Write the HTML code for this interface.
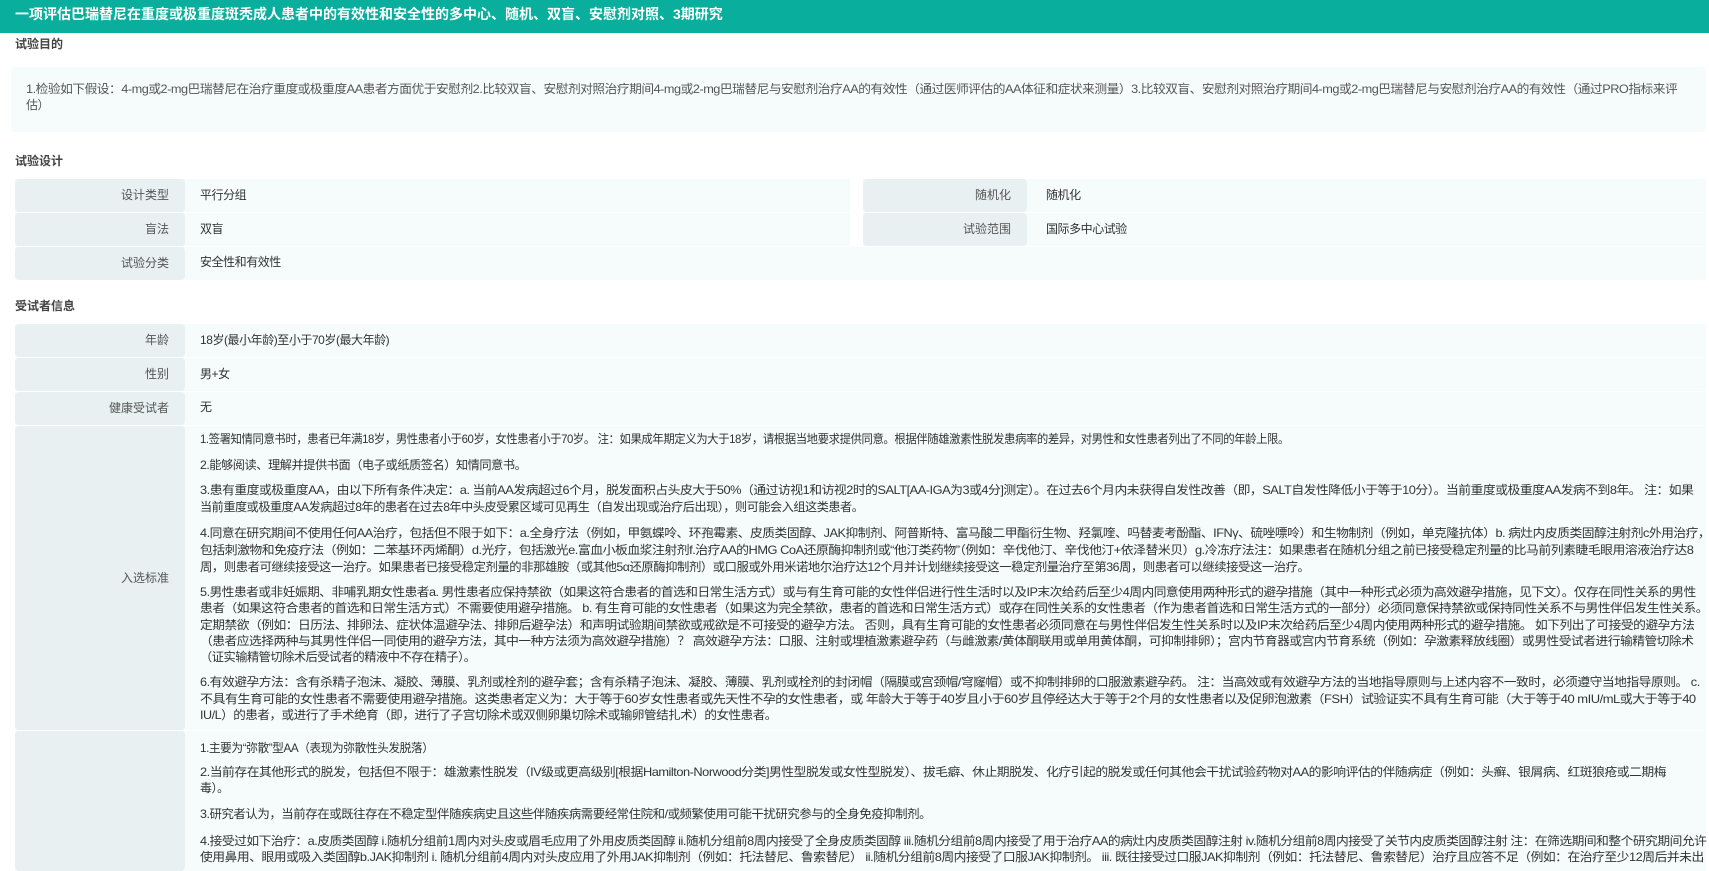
<!DOCTYPE html>
<html><head><meta charset="utf-8">
<style>
*{margin:0;padding:0;box-sizing:border-box}
body{width:1709px;height:862px;overflow:hidden;background:#fff;font-family:"Liberation Sans","Noto Sans CJK SC",sans-serif;font-size:12px;color:#333;position:relative}
.a{position:absolute;white-space:nowrap;line-height:17px;letter-spacing:-0.45px;transform-origin:0 0}
.hd{position:absolute;left:0;top:0;width:1709px;height:33px;background:#0aae9c;color:#fff;font-weight:bold;font-size:14px;line-height:29px;padding-left:15px}
.sec{position:absolute;left:15px;font-weight:bold;color:#444;font-size:12px;line-height:17px}
.box{position:absolute;background:#f6fbfb}
.lab{position:absolute;background:#e8f0f1;border-radius:4px;color:#555;text-align:right;padding-right:16px}
</style></head><body>
<div class="hd">一项评估巴瑞替尼在重度或极重度斑秃成人患者中的有效性和安全性的多中心、随机、双盲、安慰剂对照、3期研究</div>

<div class="sec" style="top:36px">试验目的</div>
<div class="box" style="left:11px;top:67px;width:1695px;height:65px;border-radius:4px"></div>
<div class="a" style="left:26px;top:81px;color:#555;transform:scaleX(1.059)">1.检验如下假设：4-mg或2-mg巴瑞替尼在治疗重度或极重度AA患者方面优于安慰剂2.比较双盲、安慰剂对照治疗期间4-mg或2-mg巴瑞替尼与安慰剂治疗AA的有效性（通过医师评估的AA体征和症状来测量）3.比较双盲、安慰剂对照治疗期间4-mg或2-mg巴瑞替尼与安慰剂治疗AA的有效性（通过PRO指标来评</div>
<div class="a" style="left:26px;top:97px;color:#555">估）</div>

<div class="sec" style="top:153px">试验设计</div>
<div class="box" style="left:15px;top:179px;width:835px;height:33px"></div>
<div class="lab" style="left:15px;top:179px;width:170px;height:33px;line-height:33px">设计类型</div>
<div class="a" style="left:200px;top:187px">平行分组</div>
<div class="box" style="left:863px;top:179px;width:843px;height:33px"></div>
<div class="lab" style="left:863px;top:179px;width:164px;height:33px;line-height:33px">随机化</div>
<div class="a" style="left:1046px;top:187px">随机化</div>
<div class="box" style="left:15px;top:213px;width:835px;height:33px"></div>
<div class="lab" style="left:15px;top:213px;width:170px;height:33px;line-height:33px">盲法</div>
<div class="a" style="left:200px;top:221px">双盲</div>
<div class="box" style="left:863px;top:213px;width:843px;height:33px"></div>
<div class="lab" style="left:863px;top:213px;width:164px;height:33px;line-height:33px">试验范围</div>
<div class="a" style="left:1046px;top:221px">国际多中心试验</div>
<div class="box" style="left:15px;top:247px;width:1691px;height:33px"></div>
<div class="lab" style="left:15px;top:247px;width:170px;height:33px;line-height:33px">试验分类</div>
<div class="a" style="left:200px;top:254px">安全性和有效性</div>

<div class="sec" style="top:298px">受试者信息</div>
<div class="box" style="left:15px;top:324px;width:1691px;height:33px"></div>
<div class="lab" style="left:15px;top:324px;width:170px;height:33px;line-height:33px">年龄</div>
<div class="a" style="left:200px;top:332px">18岁(最小年龄)至小于70岁(最大年龄)</div>
<div class="box" style="left:15px;top:358px;width:1691px;height:33px"></div>
<div class="lab" style="left:15px;top:358px;width:170px;height:33px;line-height:33px">性别</div>
<div class="a" style="left:200px;top:366px">男+女</div>
<div class="box" style="left:15px;top:392px;width:1691px;height:33px"></div>
<div class="lab" style="left:15px;top:392px;width:170px;height:33px;line-height:33px">健康受试者</div>
<div class="a" style="left:200px;top:399px">无</div>

<div class="box" style="left:15px;top:426px;width:1691px;height:304px"></div>
<div class="lab" style="left:15px;top:426px;width:170px;height:304px;line-height:304px">入选标准</div>
<div class="a" style="left:200px;top:431px;transform:scaleX(0.949)">1.签署知情同意书时，患者已年满18岁，男性患者小于60岁，女性患者小于70岁。 注：如果成年期定义为大于18岁，请根据当地要求提供同意。根据伴随雄激素性脱发患病率的差异，对男性和女性患者列出了不同的年龄上限。</div>
<div class="a" style="left:200px;top:457px;transform:scaleX(1.017)">2.能够阅读、理解并提供书面（电子或纸质签名）知情同意书。</div>
<div class="a" style="left:200px;top:482px;transform:scaleX(1.066)">3.患有重度或极重度AA，由以下所有条件决定：a. 当前AA发病超过6个月，脱发面积占头皮大于50%（通过访视1和访视2时的SALT[AA-IGA为3或4分]测定）。在过去6个月内未获得自发性改善（即，SALT自发性降低小于等于10分）。当前重度或极重度AA发病不到8年。 注：如果</div>
<div class="a" style="left:200px;top:499px;transform:scaleX(1.01)">当前重度或极重度AA发病超过8年的患者在过去8年中头皮受累区域可见再生（自发出现或治疗后出现），则可能会入组这类患者。</div>
<div class="a" style="left:200px;top:525px;transform:scaleX(1.061)">4.同意在研究期间不使用任何AA治疗，包括但不限于如下：a.全身疗法（例如，甲氨蝶呤、环孢霉素、皮质类固醇、JAK抑制剂、阿普斯特、富马酸二甲酯衍生物、羟氯喹、吗替麦考酚酯、IFNγ、硫唑嘌呤）和生物制剂（例如，单克隆抗体）b. 病灶内皮质类固醇注射剂c外用治疗，</div>
<div class="a" style="left:200px;top:542px;transform:scaleX(1.07)">包括刺激物和免疫疗法（例如：二苯基环丙烯酮）d.光疗，包括激光e.富血小板血浆注射剂f.治疗AA的HMG CoA还原酶抑制剂或“他汀类药物”（例如：辛伐他汀、辛伐他汀+依泽替米贝）g.冷冻疗法注：如果患者在随机分组之前已接受稳定剂量的比马前列素睫毛眼用溶液治疗达8</div>
<div class="a" style="left:200px;top:559px;transform:scaleX(1.03)">周，则患者可继续接受这一治疗。如果患者已接受稳定剂量的非那雄胺（或其他5α还原酶抑制剂）或口服或外用米诺地尔治疗达12个月并计划继续接受这一稳定剂量治疗至第36周，则患者可以继续接受这一治疗。</div>
<div class="a" style="left:200px;top:584px;transform:scaleX(1.055)">5.男性患者或非妊娠期、非哺乳期女性患者a. 男性患者应保持禁欲（如果这符合患者的首选和日常生活方式）或与有生育可能的女性伴侣进行性生活时以及IP末次给药后至少4周内同意使用两种形式的避孕措施（其中一种形式必须为高效避孕措施，见下文）。仅存在同性关系的男性</div>
<div class="a" style="left:200px;top:600px;transform:scaleX(1.059)">患者（如果这符合患者的首选和日常生活方式）不需要使用避孕措施。 b. 有生育可能的女性患者（如果这为完全禁欲，患者的首选和日常生活方式）或存在同性关系的女性患者（作为患者首选和日常生活方式的一部分）必须同意保持禁欲或保持同性关系不与男性伴侣发生性关系。</div>
<div class="a" style="left:200px;top:617px;transform:scaleX(1.061)">定期禁欲（例如：日历法、排卵法、症状体温避孕法、排卵后避孕法）和声明试验期间禁欲或戒欲是不可接受的避孕方法。 否则，具有生育可能的女性患者必须同意在与男性伴侣发生性关系时以及IP末次给药后至少4周内使用两种形式的避孕措施。 如下列出了可接受的避孕方法</div>
<div class="a" style="left:200px;top:633px;transform:scaleX(1.06)">（患者应选择两种与其男性伴侣一同使用的避孕方法，其中一种方法须为高效避孕措施）？ 高效避孕方法：口服、注射或埋植激素避孕药（与雌激素/黄体酮联用或单用黄体酮，可抑制排卵）；宫内节育器或宫内节育系统（例如：孕激素释放线圈）或男性受试者进行输精管切除术</div>
<div class="a" style="left:200px;top:649px;transform:scaleX(1.016)">（证实输精管切除术后受试者的精液中不存在精子）。</div>
<div class="a" style="left:200px;top:674px;transform:scaleX(1.062)">6.有效避孕方法：含有杀精子泡沫、凝胶、薄膜、乳剂或栓剂的避孕套；含有杀精子泡沫、凝胶、薄膜、乳剂或栓剂的封闭帽（隔膜或宫颈帽/穹窿帽）或不抑制排卵的口服激素避孕药。 注：当高效或有效避孕方法的当地指导原则与上述内容不一致时，必须遵守当地指导原则。 c.</div>
<div class="a" style="left:200px;top:691px;transform:scaleX(1.081)">不具有生育可能的女性患者不需要使用避孕措施。这类患者定义为：大于等于60岁女性患者或先天性不孕的女性患者，或 年龄大于等于40岁且小于60岁且停经达大于等于2个月的女性患者以及促卵泡激素（FSH）试验证实不具有生育可能（大于等于40 mIU/mL或大于等于40</div>
<div class="a" style="left:200px;top:707px;transform:scaleX(1.046)">IU/L）的患者，或进行了手术绝育（即，进行了子宫切除术或双侧卵巢切除术或输卵管结扎术）的女性患者。</div>

<div class="box" style="left:15px;top:731px;width:1691px;height:140px"></div>
<div class="lab" style="left:15px;top:731px;width:170px;height:140px"></div>
<div class="a" style="left:200px;top:740px;transform:scaleX(0.976)">1.主要为“弥散”型AA（表现为弥散性头发脱落）</div>
<div class="a" style="left:200px;top:764px;transform:scaleX(1.067)">2.当前存在其他形式的脱发，包括但不限于：雄激素性脱发（IV级或更高级别[根据Hamilton-Norwood分类]男性型脱发或女性型脱发）、拔毛癖、休止期脱发、化疗引起的脱发或任何其他会干扰试验药物对AA的影响评估的伴随病症（例如：头癣、银屑病、红斑狼疮或二期梅</div>
<div class="a" style="left:200px;top:780px">毒）。</div>
<div class="a" style="left:200px;top:806px;transform:scaleX(1.037)">3.研究者认为，当前存在或既往存在不稳定型伴随疾病史且这些伴随疾病需要经常住院和/或频繁使用可能干扰研究参与的全身免疫抑制剂。</div>
<div class="a" style="left:200px;top:833px;transform:scaleX(1.06)">4.接受过如下治疗：a.皮质类固醇 i.随机分组前1周内对头皮或眉毛应用了外用皮质类固醇 ii.随机分组前8周内接受了全身皮质类固醇 iii.随机分组前8周内接受了用于治疗AA的病灶内皮质类固醇注射 iv.随机分组前8周内接受了关节内皮质类固醇注射 注：在筛选期间和整个研究期间允许</div>
<div class="a" style="left:200px;top:849px;transform:scaleX(1.065)">使用鼻用、眼用或吸入类固醇b.JAK抑制剂 i. 随机分组前4周内对头皮应用了外用JAK抑制剂（例如：托法替尼、鲁索替尼） ii.随机分组前8周内接受了口服JAK抑制剂。 iii. 既往接受过口服JAK抑制剂（例如：托法替尼、鲁索替尼）治疗且应答不足（例如：在治疗至少12周后并未出</div>
</body></html>
